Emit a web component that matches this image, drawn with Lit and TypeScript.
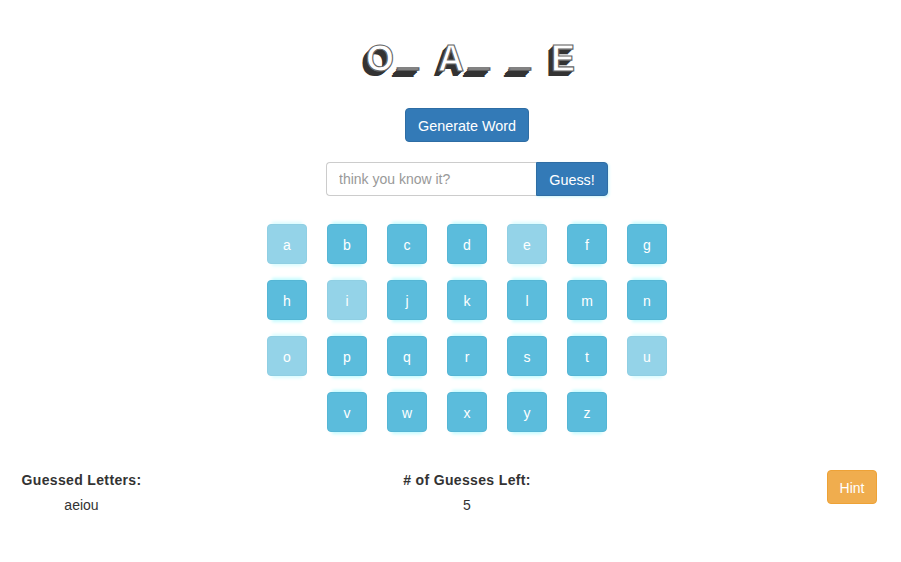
import { LitElement, html, css } from "lit";
import { customElement } from "lit/decorators.js";

const ROWS = "abcdefghijklmnopqrstuvwxyz".split("");
const GUESSED = "aeiou";
const WORD = ["O", "_", "A", "_", "_", "E"];

@customElement("app-root")
export class AppRoot extends LitElement {
  static styles = css`
    :host {
      display: block;
      width: 901px;
      height: 562px;
      background: #fff;
      color: #333;
      font-family: "Liberation Sans", Arial, sans-serif;
      font-size: 14.4px;
      overflow: hidden;
    }
    .main {
      margin-left: 163px;
      width: 608px;
      display: flex;
      flex-direction: column;
      align-items: center;
    }
    .word {
      margin-top: 38px;
      height: 42px;
      padding-left: 6px;
      display: flex;
      align-items: baseline;
      font-family: "Liberation Sans", sans-serif;
      font-weight: 700;
      font-size: 36px;
      line-height: 42px;
      color: #fff;
      -webkit-text-stroke: 1.1px #666;
      text-shadow: -1px 1px 0 #333, -2px 2px 0 #333, -3px 3px 0 #333, -4px 4px 0 #333, -5px 5px 0 #333;
    }
    .ch {
      width: 28px;
      text-align: center;
      margin-left: 3px;
    }
    .ch.letter + .ch.blank {
      margin-left: 2px;
    }
    .ch.blank + .ch {
      margin-left: 16px;
    }
    .ch.blank {
      width: 25px;
    }
    .ch.blank i {
      font-style: normal;
      display: inline-block;
      transform: translateY(-12px) scale(1.05, 1.4);
    }
    .btn {
      font: inherit;
      color: #fff;
      border: 1px solid transparent;
      border-radius: 4px;
      padding: 1px 0 0;
      box-sizing: border-box;
      height: 34px;
      display: flex;
      align-items: center;
      justify-content: center;
    }
    .primary {
      background: #337ab7;
      border-color: #2e6da4;
    }
    .generate {
      margin-top: 28px;
      width: 124px;
    }
    .guess {
      margin-top: 20px;
      display: flex;
      width: 282px;
    }
    .guess input {
      flex: 1;
      min-width: 0;
      box-sizing: border-box;
      height: 34px;
      padding: 0 12px;
      font: inherit;
      font-size: 14px;
      color: #555;
      border: 1px solid #ccc;
      border-right: 0;
      border-radius: 4px 0 0 4px;
      outline: none;
      background: #fff;
    }
    .guess input::placeholder {
      color: #999;
      opacity: 1;
    }
    .guess .btn {
      width: 72px;
      border-radius: 0 4px 4px 0;
      box-shadow: 1px 1px 3px #c9f5fb;
    }
    .keys {
      margin-top: 28px;
      width: 420px;
      display: flex;
      flex-wrap: wrap;
      justify-content: center;
      row-gap: 16px;
    }
    .key {
      width: 40px;
      height: 40px;
      margin: 0 10px;
      font-size: 14px;
      background: #5bbcdc;
      border-color: #55b6d5;
      box-shadow: 0 -7px 3px -5px #c5fcff, 0 7px 3px -5px #c5fcff;
    }
    .key.used {
      opacity: 0.65;
    }
    .foot {
      margin-top: 40px;
      display: grid;
      grid-template-columns: 163px 608px 1fr;
    }
    .col {
      display: flex;
      flex-direction: column;
      align-items: center;
      gap: 8px;
      font-size: 14px;
    }
    .col b {
      line-height: 17px;
      letter-spacing: 0.35px;
    }
    .col span {
      line-height: 17px;
    }
    .right {
      padding-left: 56px;
      margin-top: -2px;
    }
    .hint {
      width: 50px;
      background: #f0ad4e;
      border-color: #eea236;
      font-size: 14px;
    }
  `;

  render() {
    return html`
      <div class="main">
        <div class="word">
          ${WORD.map((c) =>
            c === "_"
              ? html`<span class="ch blank"><i>_</i></span>`
              : html`<span class="ch letter">${c}</span>`
          )}
        </div>
        <button class="btn primary generate">Generate Word</button>
        <div class="guess">
          <input placeholder="think you know it?" />
          <button class="btn primary">Guess!</button>
        </div>
        <div class="keys">
          ${ROWS.map(
            (l) => html`<button class="btn key ${GUESSED.includes(l) ? "used" : ""}">${l}</button>`
          )}
        </div>
      </div>
      <div class="foot">
        <div class="col"><b>Guessed Letters:</b><span>aeiou</span></div>
        <div class="col"><b># of Guesses Left:</b><span>5</span></div>
        <div class="right"><button class="btn hint">Hint</button></div>
      </div>
    `;
  }
}
